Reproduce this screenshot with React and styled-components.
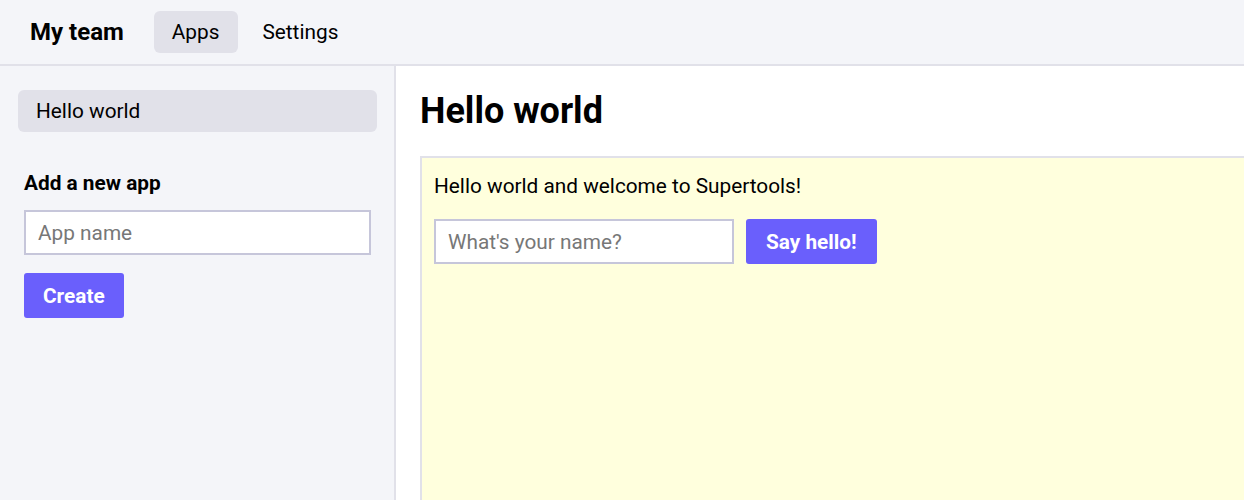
import React from "react";
import styled, { createGlobalStyle } from "styled-components";

const GlobalStyle = createGlobalStyle`
  html, body {
    margin: 0;
    padding: 0;
    height: 100%;
    font-family: Roboto, "Liberation Sans", sans-serif;
    color: #000;
  }
  #root {
    height: 100%;
  }
  * {
    box-sizing: border-box;
  }
`;

const App = () => {
  return (
    <>
      <GlobalStyle />
      <Page>
        <Header>
          <TeamName>My team</TeamName>
          <Tab active>Apps</Tab>
          <Tab>Settings</Tab>
        </Header>
        <Body>
          <Sidebar>
            <AppItem>Hello world</AppItem>
            <NewApp>
              <NewAppTitle>Add a new app</NewAppTitle>
              <SidebarInput placeholder="App name" />
              <Button>Create</Button>
            </NewApp>
          </Sidebar>
          <Main>
            <Title>Hello world</Title>
            <AppFrame>
              <Welcome>Hello world and welcome to Supertools!</Welcome>
              <FormRow>
                <NameInput placeholder="What's your name?" />
                <Button>Say hello!</Button>
              </FormRow>
            </AppFrame>
          </Main>
        </Body>
      </Page>
    </>
  );
};

const Page = styled.div`
  display: flex;
  flex-direction: column;
  height: 100vh;
  overflow: hidden;
`;

const Header = styled.header`
  display: flex;
  align-items: center;
  height: 66px;
  padding: 0 0 0 30px;
  background: #f4f5f9;
  border-bottom: 2px solid #e1e1e9;
  flex-shrink: 0;
`;

const TeamName = styled.div`
  font-size: 24px;
  font-weight: 700;
  margin-right: 30px;
`;

const Tab = styled.div`
  height: 42px;
  padding: 0 19px 0 18px;
  margin-right: 6px;
  display: flex;
  align-items: center;
  font-size: 20.8px;
  border-radius: 6px;
  background: ${(p) => (p.active ? "#e1e1e9" : "transparent")};
`;

const Body = styled.div`
  flex: 1;
  display: flex;
  min-height: 0;
`;

const Sidebar = styled.aside`
  width: 396px;
  flex-shrink: 0;
  background: #f4f5f9;
  border-right: 2px solid #e1e1e9;
  padding: 24px 18px 0 18px;
`;

const AppItem = styled.div`
  height: 42px;
  padding: 0 18px;
  display: flex;
  align-items: center;
  font-size: 20.8px;
  background: #e1e1e9;
  border-radius: 6px;
  width: 359px;
`;

const NewApp = styled.div`
  padding: 39px 6px 0;
  display: flex;
  flex-direction: column;
  align-items: flex-start;
`;

const NewAppTitle = styled.div`
  font-size: 20.8px;
  font-weight: 700;
  line-height: 24px;
  margin-bottom: 15px;
`;

const Input = styled.input`
  height: 45px;
  border: 2px solid #c6c6da;
  background: #fff;
  font-family: Roboto, "Liberation Sans", sans-serif;
  font-size: 20.8px;
  padding: 0 12px;
  outline: none;
  &::placeholder {
    color: #777;
  }
`;

const SidebarInput = styled(Input)`
  width: 347px;
  margin-bottom: 18px;
`;

const NameInput = styled(Input)`
  width: 300px;
`;

const Button = styled.button`
  height: 45px;
  padding: 0 ${(p) => (p.wide ? 20 : 19)}px;
  border: none;
  border-radius: 3px;
  background: #6a5ffc;
  color: #fff;
  font-family: Roboto, "Liberation Sans", sans-serif;
  font-size: 20.8px;
  font-weight: 700;
`;

const Main = styled.main`
  flex: 1;
  padding: 24px 0 0 24px;
  display: flex;
  flex-direction: column;
  min-width: 0;
`;

const Title = styled.h1`
  margin: 0 0 24px;
  font-size: 36px;
  font-weight: 700;
  line-height: 42px;
`;

const AppFrame = styled.div`
  height: 420px;
  flex-shrink: 0;
  background: #ffffdd;
  border: 2px solid #e1e1e9;
  border-right: none;
  padding: 14px 12px;
`;

const Welcome = styled.div`
  font-size: 20.8px;
  line-height: 28px;
  margin-bottom: 19px;
`;

const FormRow = styled.div`
  display: flex;
  gap: 12px;
  & > button {
    padding: 0 20px;
  }
`;

export default App;
